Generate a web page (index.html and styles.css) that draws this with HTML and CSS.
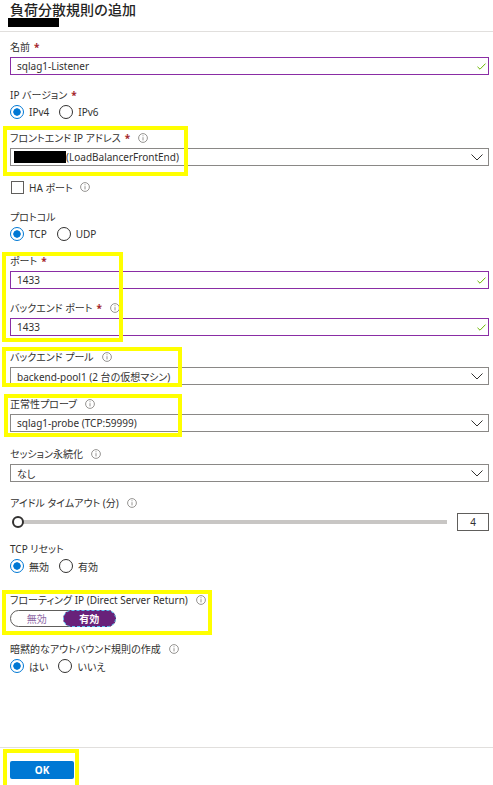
FILE: index.html
```html
<!DOCTYPE html>
<html lang="ja">
<head>
<meta charset="utf-8">
<title>負荷分散規則の追加</title>
<link rel="stylesheet" href="styles.css">
</head>
<body>
<div class="panel">
  <header class="head">
    <h1 class="title">負荷分散規則の追加</h1>
    <div class="redact-sub"></div>
  </header>

  <div class="form">
    <div class="field mt-8">
      <div class="label">名前<span class="req">*</span></div>
      <div class="input valid"><span>sqlag1-Listener</span>
        <svg class="check" width="9" height="7" viewBox="0 0 9 7"><path d="M0.5 3.8 L3 6.2 L8.5 0.6" fill="none" stroke="#6bb700" stroke-width="1"/></svg>
      </div>
    </div>

    <div class="field mt-13">
      <div class="label">IP バージョン<span class="req">*</span></div>
      <div class="radio-group">
        <div class="radio"><span class="dot on"></span>IPv4</div>
        <div class="radio"><span class="dot"></span>IPv6</div>
      </div>
    </div>

    <div class="field mt-12">
      <div class="label">フロントエンド IP アドレス<span class="req">*</span>
        <svg class="info" width="10" height="10" viewBox="0 0 10 10"><circle cx="5" cy="5" r="4.4" fill="none" stroke="#8a8886" stroke-width="0.9"/><path d="M5 4.2 V7.4" stroke="#8a8886" stroke-width="0.9"/><circle cx="5" cy="2.8" r="0.55" fill="#8a8886"/></svg>
      </div>
      <div class="select"><span><span class="redact"></span>(LoadBalancerFrontEnd)</span>
        <svg class="chev" width="12" height="7" viewBox="0 0 12 7"><path d="M0.5 0.5 L6 6 L11.5 0.5" fill="none" stroke="#323130" stroke-width="1"/></svg>
      </div>
    </div>

    <div class="check-row mt-14">
      <span class="box"></span>HA ポート
      <svg class="info" width="10" height="10" viewBox="0 0 10 10"><circle cx="5" cy="5" r="4.4" fill="none" stroke="#8a8886" stroke-width="0.9"/><path d="M5 4.2 V7.4" stroke="#8a8886" stroke-width="0.9"/><circle cx="5" cy="2.8" r="0.55" fill="#8a8886"/></svg>
    </div>

    <div class="field mt-16">
      <div class="label">プロトコル</div>
      <div class="radio-group">
        <div class="radio"><span class="dot on"></span>TCP</div>
        <div class="radio"><span class="dot"></span>UDP</div>
      </div>
    </div>

    <div class="field mt-13">
      <div class="label">ポート<span class="req">*</span></div>
      <div class="input valid"><span>1433</span>
        <svg class="check" width="9" height="7" viewBox="0 0 9 7"><path d="M0.5 3.8 L3 6.2 L8.5 0.6" fill="none" stroke="#6bb700" stroke-width="1"/></svg>
      </div>
    </div>

    <div class="field mt-12">
      <div class="label">バックエンド ポート<span class="req">*</span>
        <svg class="info" width="10" height="10" viewBox="0 0 10 10"><circle cx="5" cy="5" r="4.4" fill="none" stroke="#8a8886" stroke-width="0.9"/><path d="M5 4.2 V7.4" stroke="#8a8886" stroke-width="0.9"/><circle cx="5" cy="2.8" r="0.55" fill="#8a8886"/></svg>
      </div>
      <div class="input valid"><span>1433</span>
        <svg class="check" width="9" height="7" viewBox="0 0 9 7"><path d="M0.5 3.8 L3 6.2 L8.5 0.6" fill="none" stroke="#6bb700" stroke-width="1"/></svg>
      </div>
    </div>

    <div class="field mt-14">
      <div class="label">バックエンド プール
        <svg class="info" width="10" height="10" viewBox="0 0 10 10"><circle cx="5" cy="5" r="4.4" fill="none" stroke="#8a8886" stroke-width="0.9"/><path d="M5 4.2 V7.4" stroke="#8a8886" stroke-width="0.9"/><circle cx="5" cy="2.8" r="0.55" fill="#8a8886"/></svg>
      </div>
      <div class="select"><span>backend-pool1 (2 台の仮想マシン)</span>
        <svg class="chev" width="12" height="7" viewBox="0 0 12 7"><path d="M0.5 0.5 L6 6 L11.5 0.5" fill="none" stroke="#323130" stroke-width="1"/></svg>
      </div>
    </div>

    <div class="field mt-12">
      <div class="label">正常性プローブ
        <svg class="info" width="10" height="10" viewBox="0 0 10 10"><circle cx="5" cy="5" r="4.4" fill="none" stroke="#8a8886" stroke-width="0.9"/><path d="M5 4.2 V7.4" stroke="#8a8886" stroke-width="0.9"/><circle cx="5" cy="2.8" r="0.55" fill="#8a8886"/></svg>
      </div>
      <div class="select"><span>sqlag1-probe (TCP:59999)</span>
        <svg class="chev" width="12" height="7" viewBox="0 0 12 7"><path d="M0.5 0.5 L6 6 L11.5 0.5" fill="none" stroke="#323130" stroke-width="1"/></svg>
      </div>
    </div>

    <div class="field mt-15">
      <div class="label">セッション永続化
        <svg class="info" width="10" height="10" viewBox="0 0 10 10"><circle cx="5" cy="5" r="4.4" fill="none" stroke="#8a8886" stroke-width="0.9"/><path d="M5 4.2 V7.4" stroke="#8a8886" stroke-width="0.9"/><circle cx="5" cy="2.8" r="0.55" fill="#8a8886"/></svg>
      </div>
      <div class="select"><span>なし</span>
        <svg class="chev" width="12" height="7" viewBox="0 0 12 7"><path d="M0.5 0.5 L6 6 L11.5 0.5" fill="none" stroke="#323130" stroke-width="1"/></svg>
      </div>
    </div>

    <div class="field mt-14">
      <div class="label">アイドル タイムアウト (分)
        <svg class="info" width="10" height="10" viewBox="0 0 10 10"><circle cx="5" cy="5" r="4.4" fill="none" stroke="#8a8886" stroke-width="0.9"/><path d="M5 4.2 V7.4" stroke="#8a8886" stroke-width="0.9"/><circle cx="5" cy="2.8" r="0.55" fill="#8a8886"/></svg>
      </div>
      <div class="slider-row">
        <div class="slider"><span class="thumb"></span></div>
        <div class="num">4</div>
      </div>
    </div>

    <div class="field mt-11">
      <div class="label">TCP リセット</div>
      <div class="radio-group">
        <div class="radio"><span class="dot on"></span>無効</div>
        <div class="radio"><span class="dot"></span>有効</div>
      </div>
    </div>

    <div class="field mt-20">
      <div class="label">フローティング IP (Direct Server Return)
        <svg class="info" width="10" height="10" viewBox="0 0 10 10"><circle cx="5" cy="5" r="4.4" fill="none" stroke="#8a8886" stroke-width="0.9"/><path d="M5 4.2 V7.4" stroke="#8a8886" stroke-width="0.9"/><circle cx="5" cy="2.8" r="0.55" fill="#8a8886"/></svg>
      </div>
      <div class="toggle">
        <span class="seg">無効</span>
        <span class="seg sel">有効</span>
      </div>
    </div>

    <div class="field mt-15">
      <div class="label">暗黙的なアウトバウンド規則の作成
        <svg class="info" width="10" height="10" viewBox="0 0 10 10"><circle cx="5" cy="5" r="4.4" fill="none" stroke="#8a8886" stroke-width="0.9"/><path d="M5 4.2 V7.4" stroke="#8a8886" stroke-width="0.9"/><circle cx="5" cy="2.8" r="0.55" fill="#8a8886"/></svg>
      </div>
      <div class="radio-group">
        <div class="radio"><span class="dot on"></span>はい</div>
        <div class="radio"><span class="dot"></span>いいえ</div>
      </div>
    </div>
  </div>

  <footer class="foot">
    <button class="ok">OK</button>
  </footer>

  <div class="mark mark-fe"></div>
  <div class="mark mark-port"></div>
  <div class="mark mark-pool"></div>
  <div class="mark mark-probe"></div>
  <div class="mark mark-float"></div>
  <div class="mark mark-ok"></div>
</div>
</body>
</html>
```

FILE: styles.css
```css
* { box-sizing: border-box; }

body {
  margin: 0;
  background: #fff;
  color: #323130;
  font-family: "Noto Sans", "Noto Sans CJK JP", sans-serif;
  font-size: 10px;
  font-feature-settings: "palt";
}

.panel {
  position: relative;
  width: 493px;
  height: 785px;
  display: flex;
  flex-direction: column;
  overflow: hidden;
}

.head {
  padding: 0 4px 4px 10px;
  border-bottom: 1px solid #e1dfdd;
}

.title {
  margin: 0;
  font-family: "Noto Sans CJK JP", sans-serif;
  font-size: 14px;
  font-weight: 500;
  line-height: 18px;
  color: #252423;
  font-feature-settings: normal;
}

.redact-sub {
  width: 51px;
  height: 9px;
  margin-left: -2px;
  background: #000;
}

.form {
  padding: 0 4px 0 10px;
  display: flex;
  flex-direction: column;
}

.mt-8 { margin-top: 8px; }
.mt-11 { margin-top: 11px; }
.mt-12 { margin-top: 12px; }
.mt-13 { margin-top: 13px; }
.mt-14 { margin-top: 14px; }
.mt-15 { margin-top: 15px; }
.mt-16 { margin-top: 16px; }
.mt-20 { margin-top: 20px; }

.field {
  display: flex;
  flex-direction: column;
}

.label {
  display: flex;
  align-items: center;
  height: 14px;
  line-height: 14px;
  margin-bottom: 3px;
  white-space: nowrap;
}

.req {
  color: #a4262c;
  margin-left: 4px;
  font-weight: 700;
}

.info {
  margin-left: 8px;
  flex: none;
}

.input,
.select {
  height: 18px;
  display: flex;
  align-items: center;
  justify-content: space-between;
  padding: 0 5px 0 6px;
  white-space: nowrap;
}

.input {
  border: 1px solid #8a2da5;
}

.input .check {
  margin-right: -3px;
}

.select {
  border: 1px solid #8a8886;
}

.redact {
  display: inline-block;
  width: 52px;
  height: 12px;
  margin-left: -3px;
  vertical-align: -2px;
  background: #000;
}

.radio-group {
  display: flex;
  align-items: center;
  gap: 10px;
  height: 14px;
}

.radio {
  display: flex;
  align-items: center;
  gap: 5px;
}

.dot {
  width: 14px;
  height: 14px;
  border-radius: 50%;
  border: 1px solid #323130;
  flex: none;
}

.dot.on {
  border-color: #0078d4;
  background: radial-gradient(circle, #0078d4 0 3.4px, transparent 4px);
}

.check-row {
  display: flex;
  align-items: center;
  height: 14px;
}

.box {
  width: 13px;
  height: 13px;
  border: 1px solid #605e5c;
  margin: 0 5px 0 1px;
}

.check-row .info {
  margin-left: 7px;
}

.slider-row {
  display: flex;
  align-items: center;
  height: 18px;
}

.slider {
  flex: 1;
  height: 14px;
  margin-right: 10px;
  display: flex;
  align-items: center;
  background: linear-gradient(#c8c6c4, #c8c6c4) no-repeat;
  background-size: calc(100% - 8px) 4px;
  background-position: 8px center;
}

.thumb {
  width: 12px;
  height: 12px;
  margin-left: 2px;
  border-radius: 50%;
  border: 2px solid #323130;
  background: #fff;
}

.num {
  width: 32px;
  height: 18px;
  border: 1px solid #605e5c;
  display: flex;
  align-items: center;
  justify-content: center;
}

.toggle {
  display: flex;
  width: 106px;
  height: 17px;
  border: 1px solid #605e5c;
  border-radius: 9px;
}

.seg {
  flex: 1;
  display: flex;
  align-items: center;
  justify-content: center;
  color: #8e6aa6;
}

.seg.sel {
  margin: -1px -1px -1px 0;
  background: #68217a;
  color: #fff;
  font-weight: 700;
  border: 1px dashed #5ec4f2;
  border-radius: 9px;
}

.foot {
  margin-top: auto;
  height: 38px;
  border-top: 1px solid #e1dfdd;
  padding: 13px 0 0 10px;
}

.ok {
  width: 64px;
  height: 18px;
  border: none;
  border-radius: 2px;
  background: #0078d4;
  color: #fff;
  font-family: "Noto Sans", sans-serif;
  font-size: 10px;
  font-weight: 700;
  padding: 0;
}

.mark {
  position: absolute;
  border: 4px solid #ffff00;
  pointer-events: none;
}

.mark-fe { left: 3px; top: 126px; width: 185px; height: 50px; }
.mark-port { left: 2px; top: 252px; width: 121px; height: 90px; }
.mark-pool { left: 2px; top: 347px; width: 180px; height: 40px; }
.mark-probe { left: 4px; top: 394px; width: 178px; height: 43px; }
.mark-float { left: 2px; top: 590px; width: 210px; height: 45px; }
.mark-ok { left: 3px; top: 749px; width: 76px; height: 40px; }
```
